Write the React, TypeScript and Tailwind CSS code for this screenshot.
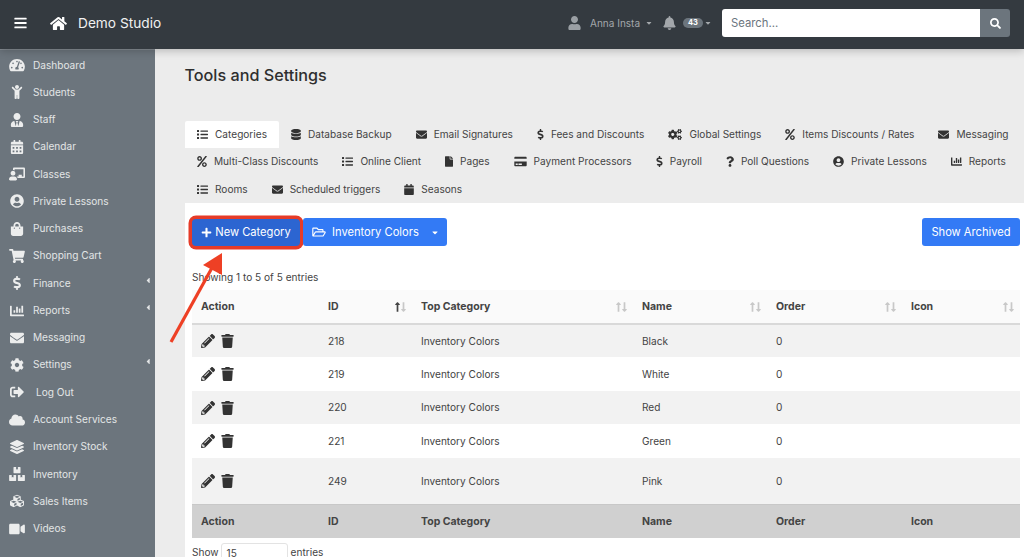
import React from "react";
import {
  FaBars, FaHome, FaUser, FaBell, FaSearch, FaTachometerAlt, FaChild, FaUserTie, FaCalendarAlt,
  FaChalkboardTeacher, FaUserCircle, FaShoppingBag, FaShoppingCart, FaDollarSign, FaChartBar,
  FaEnvelope, FaCog, FaSignOutAlt, FaCloud, FaLayerGroup, FaBoxes, FaCubes, FaVideo, FaList,
  FaDatabase, FaCogs, FaPercent, FaFile, FaCreditCard, FaQuestion, FaCalendar, FaPlus,
  FaRegFolderOpen, FaPencilAlt, FaTrash, FaLongArrowAltUp, FaLongArrowAltDown, FaCaretDown, FaCaretLeft,
} from "react-icons/fa";

const side: [any, string, boolean?, string?][] = [
  [FaTachometerAlt, "Dashboard"], [FaChild, "Students"], [FaUserTie, "Staff"], [FaCalendarAlt, "Calendar"],
  [FaChalkboardTeacher, "Classes"], [FaUserCircle, "Private Lessons"], [FaShoppingBag, "Purchases"],
  [FaShoppingCart, "Shopping Cart"], [FaDollarSign, "Finance", true], [FaChartBar, "Reports", true],
  [FaEnvelope, "Messaging"], [FaCog, "Settings", true], [FaSignOutAlt, "Log Out", false, "pl-[3px]"],
  [FaCloud, "Account Services"], [FaLayerGroup, "Inventory Stock"], [FaBoxes, "Inventory"],
  [FaCubes, "Sales Items"], [FaVideo, "Videos"],
];

const tabs: [any, string, string][] = [
  [FaList, "Categories", "w-[11px]"], [FaDatabase, "Database Backup", "w-[10px]"], [FaEnvelope, "Email Signatures", "w-[11px]"],
  [FaDollarSign, "Fees and Discounts", "w-[7px]"], [FaCogs, "Global Settings", "w-[14px]"], [FaPercent, "Items Discounts / Rates", "w-[10px]"],
  [FaEnvelope, "Messaging", "w-[11px]"], [FaPercent, "Multi-Class Discounts", "w-[10px]"], [FaList, "Online Client", "w-[11px]"], [FaFile, "Pages", "w-[8px]"],
  [FaCreditCard, "Payment Processors", "w-[13px]"], [FaDollarSign, "Payroll", "w-[7px]"], [FaQuestion, "Poll Questions", "w-[8px]"],
  [FaUserCircle, "Private Lessons", "w-[11px]"], [FaChartBar, "Reports", "w-[11px]"], [FaList, "Rooms", "w-[11px]"], [FaEnvelope, "Scheduled triggers", "w-[11px]"],
  [FaCalendar, "Seasons", "w-[10px]"],
];

const rows: [string, string, string][] = [
  ["218", "Black", "h-[33px] bg-[#f2f2f2]"],
  ["219", "White", "h-[34px] bg-white"],
  ["220", "Red", "h-[33px] bg-[#f2f2f2]"],
  ["221", "Green", "h-[34px] bg-white"],
  ["249", "Pink", "h-[46px] bg-[#f2f2f2]"],
];

const heads = ["Action", "ID", "Top Category", "Name", "Order", "Icon"];

function Sort({ active }: { active?: boolean }) {
  return (
    <span className="absolute right-[5px] top-1/2 flex -translate-y-1/2 text-[#c8c8c8]">
      <FaLongArrowAltUp className={`-mr-[1px] h-[11px] w-[7px] ${active ? "text-[#444]" : ""}`} />
      <FaLongArrowAltDown className="h-[11px] w-[7px]" />
    </span>
  );
}

export default function App() {
  return (
    <div className="flex h-[557px] w-[1024px] flex-col overflow-hidden bg-[#ececec] font-['Inter',sans-serif] text-[#444]">
      <header className="z-10 flex h-[49px] shrink-0 items-center bg-[#343a40] pb-[3px] shadow-[0_2px_8px_rgba(0,0,0,0.22)]">
        <FaBars className="ml-[14px] h-[14px] w-[13px] text-white" />
        <FaHome className="ml-[23px] h-[15px] w-[17px] text-white" />
        <span className="ml-[11px] text-[13.7px] text-[#f1f1f1]">Demo Studio</span>
        <div className="ml-auto flex items-center">
          <FaUser className="h-[14px] w-[13px] text-[#9a9fa4]" />
          <span className="ml-[9px] text-[10px] text-[#a3a7ab]">Anna Insta</span>
          <FaCaretDown className="ml-[6px] h-[8px] w-[6px] text-[#a3a7ab]" />
          <FaBell className="ml-[11px] h-[14px] w-[13px] text-[#a3a7ab]" />
          <span className="ml-[7px] flex h-[10px] w-[20px] items-center justify-center rounded-full bg-[#6c757d] text-[7.5px] font-bold text-white">43</span>
          <FaCaretDown className="ml-[2px] h-[8px] w-[6px] text-[#a3a7ab]" />
          <div className="ml-[11px] flex h-[28px] w-[288px] overflow-hidden rounded-[3px]">
            <div className="flex flex-1 items-center bg-white pl-[9px] text-[11.3px] text-[#6c757d]">Search...</div>
            <div className="flex w-[30px] items-center justify-center bg-[#6c757d]">
              <FaSearch className="h-[11px] w-[11px] text-white" />
            </div>
          </div>
        </div>
        <div className="w-[14px]" />
      </header>
      <div className="flex min-h-0 flex-1">
        <aside className="w-[155px] shrink-0 border-t border-[#868d94] bg-[#6c757d] pt-[1.5px] text-[10.1px] text-[#e3e5e6]">
          {side.map(([I, label, caret, extra], i) => (
            <div key={i} className="relative flex h-[27.27px] items-center">
              <span className="flex w-[33px] shrink-0 justify-center pl-[1px]">
                <I className="h-[14px] w-[16px] text-[#eceded]" />
              </span>
              <span className={extra}>{label}</span>
              {caret && <FaCaretLeft className="absolute right-[4px] top-[6px] h-[9px] w-[6px] text-[#e3e5e6]" />}
            </div>
          ))}
        </aside>
        <main className="min-w-0 flex-1 pl-[30px]">
          <h1 className="-ml-[0.5px] pt-[14px] text-[16.2px] font-medium leading-[24px] text-[#2f2f2f]">Tools and Settings</h1>
          <div className="mt-[34px] flex flex-wrap pb-[0.5px] text-[10.1px] text-[#444]">
            {tabs.map(([I, label, w], i) => (
              <div key={i} className={`flex h-[27.3px] items-center rounded-t-[2px] px-[12px] ${i === 0 ? "bg-white" : ""}`}>
                <I className={`mr-[7px] h-[11px] text-[#333] ${w}`} />
                {label}
              </div>
            ))}
          </div>
          <section className="h-[400px] bg-white pl-[7px] pr-[4px] pt-[15px]">
            <div className="flex items-center">
              <button className="flex h-[27px] w-[108px] items-center justify-center self-end rounded-[4px] bg-[#2c65d1] pb-[1px] text-[11.15px] text-white ring-[3.5px] ring-[#e63b28]">
                <FaPlus className="mr-[3px] h-[11px] w-[11px]" />
                New Category
              </button>
              <button className="ml-[3px] flex h-[28px] w-[144px] items-center rounded-[3px] bg-[#337af5] pl-[9px] text-[11.15px] text-white">
                <FaRegFolderOpen className="h-[12px] w-[14px]" />
                <span className="ml-[6px]">Inventory Colors</span>
                <FaCaretDown className="ml-[12px] h-[9px] w-[8px]" />
              </button>
              <button className="ml-auto h-[28px] w-[98px] rounded-[3px] bg-[#337af5] text-[11.15px] text-white">Show Archived</button>
            </div>
            <p className="mt-[24px] text-[10.1px] leading-[14px]">Showing 1 to 5 of 5 entries</p>
            <table className="mt-[6px] w-[828px] table-fixed border-collapse text-[10.1px]">
              <colgroup>
                <col className="w-[127px]" /><col className="w-[93px]" /><col className="w-[221px]" />
                <col className="w-[134px]" /><col className="w-[135px]" /><col className="w-[118px]" />
              </colgroup>
              <thead>
                <tr className="h-[34px] border-b-[2px] border-[#d9d9d9] bg-[#fafafa]">
                  {heads.map((h, i) => (
                    <th key={h} className="relative pl-[9px] text-left text-[10.5px] font-bold">
                      {h}
                      {i > 0 && <Sort active={i === 1} />}
                    </th>
                  ))}
                </tr>
              </thead>
              <tbody>
                {rows.map(([id, name, cls]) => (
                  <tr key={id} className={cls}>
                    <td className="pl-[9px]">
                      <span className="flex items-center gap-[6px] text-[#333]">
                        <FaPencilAlt className="h-[14px] w-[14px]" />
                        <FaTrash className="h-[14px] w-[13px]" />
                      </span>
                    </td>
                    <td className="pl-[9px]">{id}</td>
                    <td className="pl-[9px]">Inventory Colors</td>
                    <td className="pl-[9px]">{name}</td>
                    <td className="pl-[9px]">0</td>
                    <td />
                  </tr>
                ))}
              </tbody>
              <tfoot>
                <tr className="h-[34px] border-t border-[#c8c8c8] bg-[#d0d0d0]">
                  {heads.map((h) => (
                    <th key={h} className="pl-[9px] text-left text-[10.5px] font-bold">{h}</th>
                  ))}
                </tr>
              </tfoot>
            </table>
            <div className="mt-[5px] flex items-start text-[10.1px] leading-[12px]">
              <span className="pt-[3px]">Show</span>
              <span className="ml-[2px] flex h-[24px] w-[67px] rounded-[3px] border border-[#e3e3e3] pl-[5px] pt-[3px]">15</span>
              <span className="ml-[3px] pt-[3px]">entries</span>
            </div>
          </section>
        </main>
      </div>
      <svg className="pointer-events-none absolute left-[165px] top-[248px] h-[100px] w-[65px]" viewBox="165 248 65 100">
        <line x1="171" y1="342" x2="213" y2="266" stroke="#ee4025" strokeWidth="3.2" />
        <polygon points="222,253 203,265 222,275" fill="#ee4025" />
      </svg>
    </div>
  );
}
